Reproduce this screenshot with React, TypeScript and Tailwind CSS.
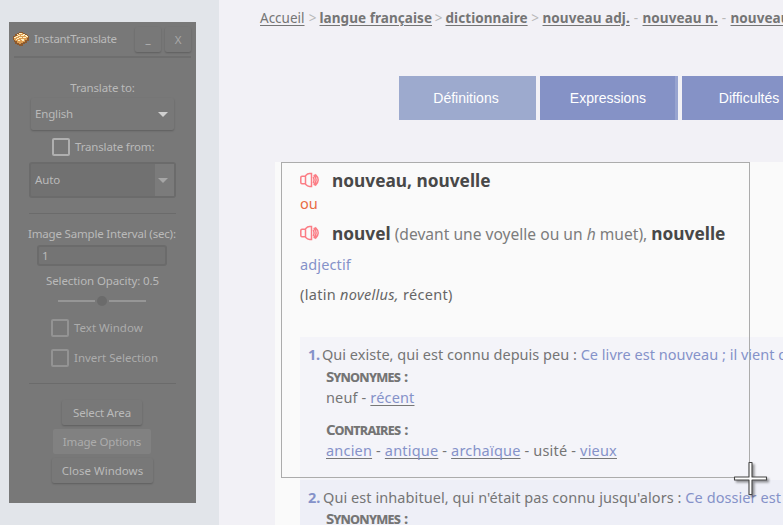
import type { ReactNode } from "react";

function Speaker() {
  return (
    <svg width="20" height="16" viewBox="0 0 20 16" fill="none" stroke="#fb7d85" strokeWidth="1.5" className="shrink-0">
      <path d="M5.5 4.2H2Q.8 4.2.8 5.4v5.2q0 1.2 1.2 1.2h3.5M5.5 4v8M5.5 3.8Q7.5 1.6 9.6 1.6h1.9v12.8H9.6Q7.5 14.4 5.5 12.2M13.4 4.6q1.4 3.4 0 6.8M15.2 2.4q6 5.6 0 11.2M13.8 2.8q4.6 5.2 0 10.4" />
    </svg>
  );
}

function Waffle() {
  return (
    <svg width="16" height="14" viewBox="0 0 16 14" shapeRendering="crispEdges">
      <path d="M6 0h4v1h2v1h2v1h1v1h1v5h-2v2h-2v1h-2v2H6v-1H4v-1H2v-2H1V8H0V4h2V2h2V1h2z" fill="#8c5a2e" />
      <path d="M6 1h4v1h2v1h2v1h1v2h-1v2h-2v2h-2v1H8v1H6v-1H4V9H2V8H1V5h1V4h2V2h2z" fill="#dc9d52" />
      <path d="M6 1h3v1H6zM10 2h2v1h-2zM4 2h1v1H4zM5 3h2v1H5zM8 3h3v1H8zM12 3h2v1h-2zM3 4h2v1H3zM6 5h3v1H6zM10 5h3v1h-3zM1 5h2v1H1zM4 6h2v1H4zM3 7h1v1H3zM8 7h3v1H8zM5 8h2v1H5zM9 8h2v1H9zM13 4h2v1h-2z" fill="#fff0c4" />
    </svg>
  );
}

function Check({ label, bright }: { label: string; bright?: boolean }) {
  return (
    <div className="flex h-[18px] items-center gap-[5px]">
      <span className={`size-[18px] rounded-[2px] border-2 ${bright ? "border-[#afafaf]" : "border-[#939393]"}`} />
      <span className={bright ? "text-[#bababa]" : "tracking-[0px] text-[#acacac]"}>{label}</span>
    </div>
  );
}

const raised = "shadow-[0_1px_2px_rgba(0,0,0,0.22)] rounded-[2px]";

function Panel() {
  return (
    <aside className="mt-[22px] ml-[9px] flex h-[481px] w-[187px] flex-col bg-[#787878] text-[11.5px] leading-4 tracking-[-0.16px] text-[#bababa]">
      <header className="mx-[5px] flex h-[36px] items-center border-b-2 border-[#6e6e6e]">
        <span className="-ml-px -mt-px"><Waffle /></span>
        <span className="ml-[5px] w-[101px] tracking-[-0.32px]">InstantTranslate</span>
        <span className={`flex h-[25px] w-[26px] items-center justify-center ${raised}`}>_</span>
        <span className={`ml-1 flex h-[25px] w-[26px] items-center justify-center pt-px text-[#a8a8a8] ${raised}`}>X</span>
      </header>
      <p className="mt-[22px] text-center">Translate to:</p>
      <div className={`ml-[22px] mt-[2px] flex h-[32px] w-[143px] items-center justify-between pl-1 pr-[6px] ${raised}`}>
        <span>English</span>
        <span className="border-x-[5px] border-t-[5px] border-x-transparent border-t-[#d0d0d0]" />
      </div>
      <div className="ml-[43px] mt-[8px]"><Check label="Translate from:" bright /></div>
      <div className="ml-[20px] mt-[6px] flex h-[36px] w-[147px] items-stretch rounded-[3px] border-2 border-[#6b6b6b] bg-[#717171]">
        <span className="flex flex-1 items-center pl-1">Auto</span>
        <span className="flex w-[19px] items-center justify-center bg-[#7b7b7b] pr-[3px]">
          <span className="border-x-[5px] border-t-[5px] border-x-transparent border-t-[#a6a6a6]" />
        </span>
      </div>
      <hr className="ml-[20px] mt-[15px] w-[147px] border-t-[1px] border-[#6b6b6b]" />
      <p className="mt-[12px] whitespace-nowrap pl-[19px] tracking-[-0.18px]">Image Sample Interval (sec):</p>
      <div className="ml-[28px] mt-[3px] flex h-[21px] w-[130px] items-center rounded-[3px] border-2 border-[#6b6b6b] bg-[#747474] pl-[3px]">1</div>
      <p className="mt-[7px] text-center tracking-[-0.1px]">Selection Opacity: 0.5</p>
      <div className="ml-[49px] mt-[6px] flex h-[11px] w-[88px] items-center">
        <span className="h-[2px] flex-1 bg-[#969696]" />
        <span className="mx-[2px] size-[10px] rounded-full bg-[#6b6b6b]" />
        <span className="h-[2px] flex-1 bg-[#969696]" />
      </div>
      <div className="ml-[42px] mt-[13px] flex flex-col gap-3">
        <Check label="Text Window" />
        <Check label="Invert Selection" />
      </div>
      <hr className="ml-[20px] mt-[16px] w-[147px] border-[#6b6b6b]" />
      <div className="mt-4 flex flex-col items-center gap-1 pr-px">
        <span className={`flex h-[25px] w-[80px] items-center justify-center ${raised}`}>Select Area</span>
        <span className="flex h-[25px] w-[98px] items-center justify-center rounded-[2px] bg-[#818181] text-[#acacac]">Image Options</span>
        <span className={`flex h-[25px] w-[101px] items-center justify-center pl-px tracking-normal ${raised}`}>Close Windows</span>
      </div>
    </aside>
  );
}

function Crumb({ children, width }: { children: ReactNode; width: string }) {
  return <a className={`${width} shrink-0 font-bold tracking-[0.06px] underline underline-offset-2`}>{children}</a>;
}

function Sep({ children, width }: { children: ReactNode; width: string }) {
  return <span className={`${width} shrink-0 text-center text-[#b8b8b8]`}>{children}</span>;
}

function Link({ children }: { children: ReactNode }) {
  return <a className="text-[#8592c9] underline decoration-[#777] decoration-1 underline-offset-2 [text-decoration-skip-ink:none]">{children}</a>;
}

function Label({ children }: { children: ReactNode }) {
  return <p className="text-[15px] font-bold tracking-[-0.8px] [font-variant-caps:small-caps] [word-spacing:1px]">{children}</p>;
}

export default function App() {
  return (
    <div className="relative flex h-[525px] w-[783px] overflow-hidden bg-[#f2f1f6] font-['Noto_Sans',sans-serif]">
      <div className="w-[219px] shrink-0 bg-[#e2e5ea]"><Panel /></div>
      <main className="flex min-w-0 flex-1 flex-col whitespace-nowrap text-[#757575]">
        <nav className="ml-[41px] mt-2 flex text-[13.5px] leading-5">
          <a className="w-[45.5px] shrink-0 underline underline-offset-2">Accueil</a>
          <Sep width="w-[14px]">&gt;</Sep>
          <Crumb width="w-[112px]">langue française</Crumb>
          <Sep width="w-[14px]">&gt;</Sep>
          <Crumb width="w-[82px]">dictionnaire</Crumb>
          <Sep width="w-[15px]">&gt;</Sep>
          <Crumb width="w-[87px]">nouveau adj.</Crumb>
          <Sep width="w-[13px]">-</Sep>
          <Crumb width="w-[75px]">nouveau n.</Crumb>
          <Sep width="w-[13px]">-</Sep>
          <Crumb width="w-[90px]">nouveau</Crumb>
        </nav>
        <div className="ml-[180px] mt-12 flex h-[44px] gap-1 font-['Liberation_Sans',sans-serif] text-sm text-white">
          <span className="flex w-[137px] shrink-0 items-center justify-center bg-[#9daace] pr-[3px]">Définitions</span>
          <span className="flex w-[138px] shrink-0 items-center justify-center border-r-[3px] border-[#98a4d0] bg-[#8592c6] pl-px">Expressions</span>
          <span className="flex w-[137px] shrink-0 items-center justify-center bg-[#8592c6] pr-[3px]">Difficultés</span>
        </div>
        <article className="ml-[56px] mt-[42px] flex h-[363px] flex-col bg-[#fafafa] pl-[25px] text-[14.5px] leading-5">
          <div className="mt-[5px] flex h-[26px] items-center">
            <Speaker />
            <b className="ml-3 mt-[2px] text-[17.3px] text-[#484848]">nouveau, nouvelle</b>
          </div>
          <p className="text-[#e96c43]">ou</p>
          <div className="mt-2 flex h-[26px] items-center">
            <Speaker />
            <p className="ml-3 mt-[2px] text-[15.6px] text-[#7c7c7c]">
              <b className="text-[17.3px] text-[#484848]">nouvel</b> (devant une voyelle ou un <i>h</i> muet), <b className="text-[17.3px] text-[#484848]">nouvelle</b>
            </p>
          </div>
          <p className="mt-2 tracking-[0.12px] text-[#8592c9]">adjectif</p>
          <p className="mt-[10px] tracking-[0.3px] text-[#666]">(latin <i>novellus,</i> récent)</p>
          <section className="mt-[33px] h-[143px] shrink-0 bg-[#f4f4f9] pl-2 pt-2">
            <p className="-mt-px mb-px tracking-[0.02px]"><b className="mr-[2px] tracking-[-0.2px] text-[#8592c9]">1.</b>Qui existe, qui est connu depuis peu : <span className="text-[#8592c9]">Ce livre est nouveau ; il vient d'être</span></p>
            <div className="pl-[18px] pt-[2px]">
              <div className="-mt-px mb-px"><Label>Synonymes :</Label></div>
              <p className="tracking-[0.15px]">neuf - <Link>récent</Link></p>
              <div className="mt-3"><Label>Contraires :</Label></div>
              <p className="mt-px tracking-[0.19px]"><Link>ancien</Link> - <Link>antique</Link> - <Link>archaïque</Link> - usité - <Link>vieux</Link></p>
            </div>
          </section>
          <section className="h-[45px] shrink-0 overflow-hidden bg-[#eeeff7] pl-2 pt-2">
            <p className="-mt-px mb-px tracking-[0.07px]"><b className="mr-[2.5px] text-[#8592c9]">2.</b>Qui est inhabituel, qui n'était pas connu jusqu'alors : <span className="text-[#8592c9]">Ce dossier est</span></p>
            <div className="pl-[18px]"><Label>Synonymes :</Label></div>
          </section>
        </article>
      </main>
      <div className="absolute left-[281px] top-[162px] h-[316px] w-[469px] border border-[#acacac]" />
      <svg className="absolute left-[732px] top-[460px] drop-shadow-[2px_2px_1px_rgba(0,0,0,0.4)]" width="38" height="38" viewBox="0 0 38 38">
        <path d="M17 2.5h3v14.5h14.5v3H20v14.5h-3V20H2.5v-3H17z" fill="#fff" stroke="#444" strokeWidth="1.1" strokeLinejoin="round" />
      </svg>
    </div>
  );
}
